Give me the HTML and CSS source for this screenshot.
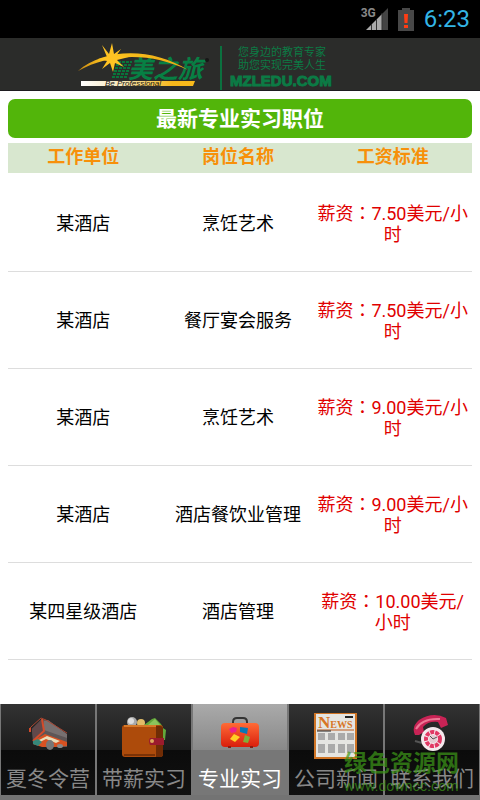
FILE: index.html
```html
<!DOCTYPE html>
<html lang="zh-CN">
<head>
<meta charset="utf-8">
<meta name="viewport" content="width=device-width, initial-scale=1">
<title>最新专业实习职位</title>
<link rel="stylesheet" href="styles.css">
</head>
<body>
<div class="status">
  <span class="signal">
    <span class="network">3G</span>
    <svg width="22" height="22" viewBox="0 0 22 22" aria-hidden="true">
      <path d="M0 22 16 6V22Z" fill="#aaa"/><path d="M16 6 22 0V22H16Z" fill="#444"/>
      <path d="M5.500 16V22M10.500 11V22M16 5V22" stroke="#333"/>
    </svg>
  </span>
  <svg class="battery" width="16" height="23" viewBox="0 0 16 23" aria-hidden="true">
    <path d="M0 2H4V0H12V2H16V23H0Z" fill="#484848"/>
    <path d="M6 6H10L9.500 15H6.500ZM6 17H10V20H6Z" fill="#ff3d14"/>
  </svg>
  <time class="clock">6:23</time>
</div>
<header class="brand">
  <svg class="logo" width="131" height="52" viewBox="0 0 131 52" role="img" aria-label="美之旅">
    <defs>
      <linearGradient id="bar"><stop offset="0" stop-color="#fff"/><stop offset=".35" stop-color="#f6e7b8"/><stop offset=".8" stop-color="#f7b91b"/><stop offset="1" stop-color="#f7b91b"/></linearGradient>
      <linearGradient id="arc"><stop offset="0" stop-color="#c98a13"/><stop offset=".25" stop-color="#ffc61f"/><stop offset="1" stop-color="#e9a813"/></linearGradient>
    </defs>
    <g stroke="#08763b" stroke-width="2" stroke-dasharray="3 1">
      <path d="M40 24H54M38 27H53M37 30H52M36 33H51M35 36H50M34 39H49"/>
    </g>
    <text class="logo-name" x="50" y="40">美之旅</text>
    <path d="M0 33C26 10 74 9 110 32C74 15 34 14 0 33Z" fill="url(#arc)"/>
    <path d="M24 7 31 16 34 5 36 16 43 11 38 18 51 19 39 22 46 29 37 25 35 34 32 25 24 31 29 23 20 21 29 19Z" fill="#ffc323"/>
    <path d="M3 43H117L115 48H3Z" fill="url(#bar)"/>
    <text class="logo-sub" x="27" y="48">Be Professional</text>
    <circle cx="129" cy="22" r="2" fill="#171717"/>
  </svg>
  <div class="slogan">
    <p>您身边的教育专家</p>
    <p>助您实现完美人生</p>
    <strong>MZLEDU.COM</strong>
  </div>
</header>
<main>
  <h1>最新专业实习职位</h1>
  <table>
    <thead><tr><th>工作单位</th><th>岗位名称</th><th>工资标准</th></tr></thead>
    <tbody>
      <tr><td>某酒店</td><td>烹饪艺术</td><td class="pay">薪资<span class="colon" lang="zh-TW">&#65306;</span>7.50美元/小<br>时</td></tr>
      <tr><td>某酒店</td><td>餐厅宴会服务</td><td class="pay">薪资<span class="colon" lang="zh-TW">&#65306;</span>7.50美元/小<br>时</td></tr>
      <tr><td>某酒店</td><td>烹饪艺术</td><td class="pay">薪资<span class="colon" lang="zh-TW">&#65306;</span>9.00美元/小<br>时</td></tr>
      <tr><td>某酒店</td><td>酒店餐饮业管理</td><td class="pay">薪资<span class="colon" lang="zh-TW">&#65306;</span>9.00美元/小<br>时</td></tr>
      <tr><td>某四星级酒店</td><td>酒店管理</td><td class="pay">薪资<span class="colon" lang="zh-TW">&#65306;</span>10.00美元/<br>小时</td></tr>
    </tbody>
  </table>
</main>
<nav class="tabs">
  <a href="#camp">
    <svg width="40" height="48" viewBox="0 0 40 48" aria-hidden="true">
      <path d="M4 16 14 6 20 8 39 22V34L26 34 5 31Z" fill="#5e5656"/>
      <path d="M16 8 20 7 39 21V25L16 17Z" fill="#777070"/>
      <path d="M4 16 14 6 16 19 6 28Z" fill="#61484a"/>
      <path d="M2 15 4 13 13 5 18 7 39 20" fill="none" stroke="#a94530" stroke-width="1"/>
      <path d="M14 6 16 18 5 28M2 15V19" fill="none" stroke="#d34b2b" stroke-width="2"/>
      <path d="M5 28 17 21 39 29V33L27 34 14 34 5 31Z" fill="#d85222"/>
      <path d="M7 29 19 23 32 28 28 30 18 26 8 31Z" fill="#e9ddb9"/>
      <path d="M5 28 10 26 14 29 10 33 5 31Z" fill="#36877a"/>
      <ellipse cx="22" cy="32" rx="4" ry="5" fill="#777"/><ellipse cx="32" cy="33" rx="3" ry="2" fill="#888"/>
    </svg>
    <span>夏冬令营</span>
  </a>
  <a href="#paid">
    <svg width="46" height="48" viewBox="0 0 46 48" aria-hidden="true">
      <circle cx="11" cy="9" r="5" fill="#aaa"/><circle cx="10" cy="8" r="3" fill="#ddd"/><circle cx="20" cy="10" r="4" fill="#e2bd68"/>
      <path d="M23 12 31 6 34 5 40 11 42 15 45 17 44 27 38 27V13Z" fill="#63a83b"/><path d="m27 12 7-6 5 6Z" fill="#8bc45d"/>
      <rect x="1" y="12" width="41" height="32" rx="3" fill="#ad4b0b"/><path d="M35 13H39Q42 13 42 16V41Q42 44 39 44H35Z" fill="#702c05"/>
      <path d="M3 13H35" stroke="#d77928" stroke-width="2"/><path d="M3 42H34" stroke="#7b3206" stroke-width="2"/>
      <path d="M29 25H43V32H29Q27 28 29 25Z" fill="#9b1b2d"/><circle cx="31" cy="28" r="2" fill="#dda75b"/>
    </svg>
    <span>带薪实习</span>
  </a>
  <a href="#major" class="current" aria-current="page">
    <svg width="40" height="48" viewBox="0 0 40 48" aria-hidden="true">
      <defs><linearGradient id="case" x2="0" y2="1"><stop stop-color="#ff6b36"/><stop offset="1" stop-color="#d91e0c"/></linearGradient></defs>
      <path d="M13 12V9Q13 5 17 5H23Q27 5 27 9V12" fill="none" stroke="#343434" stroke-width="2"/>
      <rect x="1" y="10" width="38" height="24" rx="4" fill="url(#case)"/><path d="M8 34H11M30 34H33" stroke="#8b1d12" stroke-width="2"/>
      <path d="m9 16 4-2 4 1-1 4-5 1Z" fill="#ed218c"/><path d="m20 14 8 1-1 6-7-2Z" fill="#0877b6"/><path d="m14 21 6 3-5 5-5-3Z" fill="#ffcf25"/><path d="m25 22 5 2-2 6-5-1Z" fill="#7fae3a"/>
    </svg>
    <span>专业实习</span>
  </a>
  <a href="#news">
    <svg width="44" height="48" viewBox="0 0 44 48" aria-hidden="true">
      <rect x="1" y="0" width="41" height="45" fill="#e5e5e2" stroke="#cf7425" stroke-width="2"/>
      <path d="M31 4H39" stroke="#222" stroke-width="2"/>
      <text class="news-word" x="4" y="15"><tspan class="news-cap">N</tspan>EWS</text>
      <path d="M3 17H40" stroke="#b95b20"/><path d="M3 18H17" stroke="#222"/>
      <path d="M4 20H11V27H4ZM14 20H21V27H14ZM24 20H31V27H24ZM33 20H40V27H33ZM4 31H11V40H4ZM14 31H21V40H14ZM24 31H31V40H24ZM33 31H40V40H33Z" fill="#aaa"/>
    </svg>
    <span>公司新闻</span>
  </a>
  <a href="#contact">
    <svg width="40" height="48" viewBox="0 0 40 48" aria-hidden="true">
      <path d="M3 22Q-1 14 7 7Q21 -2 34 5L36 12 29 15 26 9Q16 8 11 14L12 19 7 22Z" fill="#c82355"/>
      <path d="M4 16Q10 5 28 6" fill="none" stroke="#ec7895" stroke-width="2"/>
      <path d="M3 28 10 30" stroke="#555" stroke-width="2"/>
      <circle cx="21" cy="26" r="12" fill="#f4e8ec"/><circle cx="21" cy="26" r="7" fill="none" stroke="#e13864" stroke-width="4" stroke-dasharray="4 1"/><circle cx="21" cy="26" r="4" fill="#e5cbd2"/><path d="m18 23 3 3 4-2" fill="none" stroke="#555"/>
    </svg>
    <span>联系我们</span>
  </a>
  <div class="watermark"><b>绿色资源网</b><span>www.downcc.com</span></div>
</nav>
</body>
</html>
```
FILE: styles.css
```css
* { box-sizing: border-box; }
body {
  margin: 0;
  min-height: 100vh;
  display: flex;
  flex-direction: column;
  background: #fff;
  color: #000;
  font-family: Roboto, "Noto Sans CJK SC", sans-serif;
}
.status {
  height: 38px;
  padding: 0 10px;
  display: flex;
  justify-content: flex-end;
  align-items: center;
  gap: 10px;
  background: #000;
}
.signal { display: flex; align-items: flex-end; position: relative; }
.network {
  position: absolute;
  right: 12px;
  top: -1px;
  color: #888;
  font-size: 12px;
  line-height: 12px;
  font-weight: 700;
}
.clock { color: #33b5e5; font-size: 24px; line-height: 38px; }
.brand {
  height: 53px;
  padding-left: 78px;
  display: flex;
  align-items: flex-start;
  background: #2b2c2a;
  border-bottom: 1px solid #1e1c20;
}
.logo { overflow: visible; flex: none; }
.logo-name { fill: #078044; font-size: 25px; font-weight: 700; font-style: italic; }
.logo-sub { fill: #111; font: italic 8px "Liberation Sans", sans-serif; }
.slogan {
  margin: 8px 0 0 11px;
  padding-left: 8px;
  border-left: 2px solid #0b713f;
  color: #0b7b45;
}
.slogan p { margin: 0 0 0 8px; font-size: 11px; line-height: 13px; }
.slogan strong {
  display: block;
  font-family: "Liberation Sans", sans-serif;
  font-size: 15px;
  line-height: 18px;
  -webkit-text-stroke: 1px #0b7b45;
}
main { flex: 1; padding: 8px 8px 0; }
h1 {
  margin: 0 0 5px;
  padding-top: 1px;
  border-radius: 7px;
  background: #52b50a;
  color: #fff;
  font-size: 21px;
  line-height: 38px;
  font-weight: 700;
  text-align: center;
}
table { width: 100%; border-collapse: separate; border-spacing: 0; table-layout: fixed; font-size: 18px; }
th, td { padding: 0 4px 0 0; text-align: center; font-weight: 400; }
th { height: 30px; padding-bottom: 2px; background: #d8e7cf; color: #f7900a; line-height: 28px; font-weight: 700; }
td { height: 97px; border-bottom: 1px solid #ddd; line-height: 21px; }
tbody::before { content: ""; display: table-row; height: 2px; }
.pay { color: #e00000; white-space: nowrap; }
.colon { font-family: "Noto Sans CJK TC", sans-serif; }
.tabs {
  position: relative;
  display: grid;
  grid-template-columns: repeat(5, 1fr);
  border-bottom: 5px solid #737373;
  background: #111;
}
.tabs a {
  min-width: 0;
  height: 91px;
  padding-top: 9px;
  display: flex;
  flex-direction: column;
  align-items: center;
  gap: 6px;
  border: solid #777;
  border-width: 0 1px;
  background: linear-gradient(#333, #1c1c1c 50%, #0b0b0b 51%, #111);
  color: #888;
  font-size: 21px;
  line-height: 24px;
  text-decoration: none;
  white-space: nowrap;
}
.tabs a.current { background: linear-gradient(#aaa, #898989 50%, #777 51%, #777); color: #fff; }
.news-word { fill: #d77525; font: bold 10px "Liberation Serif", serif; }
.news-cap { font-size: 17px; }
.watermark {
  position: absolute;
  right: 21px;
  bottom: 0;
  display: flex;
  flex-direction: column;
  color: #3d9918;
  opacity: 0.7;
  pointer-events: none;
}
.watermark b { font-size: 23px; line-height: 27px; }
.watermark span { font-size: 14px; line-height: 18px; }
```
